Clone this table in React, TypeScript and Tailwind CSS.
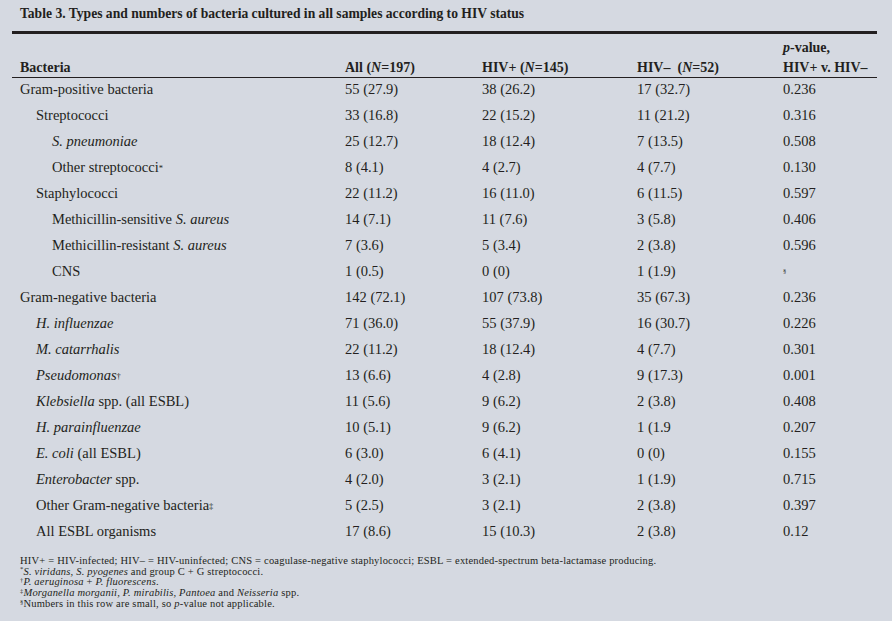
import type { ReactNode } from "react";

type Row = {
  level: 0 | 1 | 2;
  label: ReactNode;
  values: ReactNode[];
};

const Sup = ({ children }: { children: ReactNode }) => (
  <sup className="text-[8.5px] relative -top-[1px]">{children}</sup>
);

const NoteMark = ({ children }: { children: ReactNode }) => <sup className="text-[6.5px]">{children}</sup>;

const rows: Row[] = [
  { level: 0, label: "Gram-positive bacteria", values: ["55 (27.9)", "38 (26.2)", "17 (32.7)", "0.236"] },
  { level: 1, label: "Streptococci", values: ["33 (16.8)", "22 (15.2)", "11 (21.2)", "0.316"] },
  { level: 2, label: <i>S. pneumoniae</i>, values: ["25 (12.7)", "18 (12.4)", "7 (13.5)", "0.508"] },
  {
    level: 2,
    label: (
      <>
        Other streptococci<Sup>*</Sup>
      </>
    ),
    values: ["8 (4.1)", "4 (2.7)", "4 (7.7)", "0.130"],
  },
  { level: 1, label: "Staphylococci", values: ["22 (11.2)", "16 (11.0)", "6 (11.5)", "0.597"] },
  {
    level: 2,
    label: (
      <>
        Methicillin-sensitive <i>S. aureus</i>
      </>
    ),
    values: ["14 (7.1)", "11 (7.6)", "3 (5.8)", "0.406"],
  },
  {
    level: 2,
    label: (
      <>
        Methicillin-resistant <i>S. aureus</i>
      </>
    ),
    values: ["7 (3.6)", "5 (3.4)", "2 (3.8)", "0.596"],
  },
  { level: 2, label: "CNS", values: ["1 (0.5)", "0 (0)", "1 (1.9)", <NoteMark>§</NoteMark>] },
  { level: 0, label: "Gram-negative bacteria", values: ["142 (72.1)", "107 (73.8)", "35 (67.3)", "0.236"] },
  { level: 1, label: <i>H. influenzae</i>, values: ["71 (36.0)", "55 (37.9)", "16 (30.7)", "0.226"] },
  { level: 1, label: <i>M. catarrhalis</i>, values: ["22 (11.2)", "18 (12.4)", "4 (7.7)", "0.301"] },
  {
    level: 1,
    label: (
      <>
        <i>Pseudomonas</i>
        <Sup>†</Sup>
      </>
    ),
    values: ["13 (6.6)", "4 (2.8)", "9 (17.3)", "0.001"],
  },
  {
    level: 1,
    label: (
      <>
        <i>Klebsiella</i> spp. (all ESBL)
      </>
    ),
    values: ["11 (5.6)", "9 (6.2)", "2 (3.8)", "0.408"],
  },
  { level: 1, label: <i>H. parainfluenzae</i>, values: ["10 (5.1)", "9 (6.2)", "1 (1.9", "0.207"] },
  {
    level: 1,
    label: (
      <>
        <i>E. coli</i> (all ESBL)
      </>
    ),
    values: ["6 (3.0)", "6 (4.1)", "0 (0)", "0.155"],
  },
  {
    level: 1,
    label: (
      <>
        <i>Enterobacter</i> spp.
      </>
    ),
    values: ["4 (2.0)", "3 (2.1)", "1 (1.9)", "0.715"],
  },
  {
    level: 1,
    label: (
      <>
        Other Gram-negative bacteria<Sup>‡</Sup>
      </>
    ),
    values: ["5 (2.5)", "3 (2.1)", "2 (3.8)", "0.397"],
  },
  { level: 1, label: "All ESBL organisms", values: ["17 (8.6)", "15 (10.3)", "2 (3.8)", "0.12"] },
];

const indent = ["pl-[8px]", "pl-[24px]", "pl-[40px]"];

export default function App() {
  return (
    <div className="w-[892px] h-[627px] bg-white font-['Liberation_Serif',serif] text-[#231f20]">
      <div className="h-[621px] bg-[#d5d9e1] pt-[6px]">
        {/* Title */}
        <div className="ml-[12px] w-[865px] border-b-[3px] border-[#231f20]">
          <h1 className="pl-[8px] pb-[9px] text-[13.6px] font-bold leading-[16px]">
            Table 3. Types and numbers of bacteria cultured in all samples according to HIV status
          </h1>
        </div>

        <div className="ml-[12px] w-[865px]">
          {/* Header */}
          <div className="grid grid-cols-[333px_137px_155px_146px_1fr] items-end border-b border-[#231f20] h-[44px] text-[14px] font-bold leading-[16px]">
            <div className="pl-[8px] mb-[1px]">Bacteria</div>
            <div className="mb-[1px]">
              All (<i>N</i>=197)
            </div>
            <div className="mb-[1px]">
              HIV+ (<i>N</i>=145)
            </div>
            <div className="mb-[1px]">
              HIV– &nbsp;(<i>N</i>=52)
            </div>
            <div className="mb-[1px]">
              <div>
                <i>p</i>-value,
              </div>
              <div className="mt-[4px]">HIV+ v. HIV–</div>
            </div>
          </div>

          {/* Body */}
          <div className="-mt-[2px] text-[14.5px]">
            {rows.map((row, i) => (
              <div
                key={i}
                className="grid grid-cols-[333px_137px_155px_146px_1fr] items-center h-[26px] leading-[16px]"
              >
                <div className={indent[row.level]}>{row.label}</div>
                {row.values.map((v, j) => (
                  <div key={j}>{v}</div>
                ))}
              </div>
            ))}
          </div>
        </div>

        {/* Footnotes */}
        <div className="pl-[20px] pt-[12px] text-[10.5px] leading-[10.7px] tracking-[0.2px]">
          <p>
            HIV+ = HIV-infected; HIV– = HIV-uninfected; CNS = coagulase-negative staphylococci; ESBL = extended-spectrum
            beta-lactamase producing.
          </p>
          <p>
            <NoteMark>*</NoteMark>
            <i>S. viridans, S. pyogenes</i> and group C + G streptococci.
          </p>
          <p>
            <NoteMark>†</NoteMark>
            <i>P. aeruginosa</i> + <i>P. fluorescens</i>.
          </p>
          <p>
            <NoteMark>‡</NoteMark>
            <i>Morganella morganii, P. mirabilis, Pantoea</i> and <i>Neisseria</i> spp.
          </p>
          <p>
            <NoteMark>§</NoteMark>Numbers in this row are small, so <i>p</i>-value not applicable.
          </p>
        </div>
      </div>
    </div>
  );
}
